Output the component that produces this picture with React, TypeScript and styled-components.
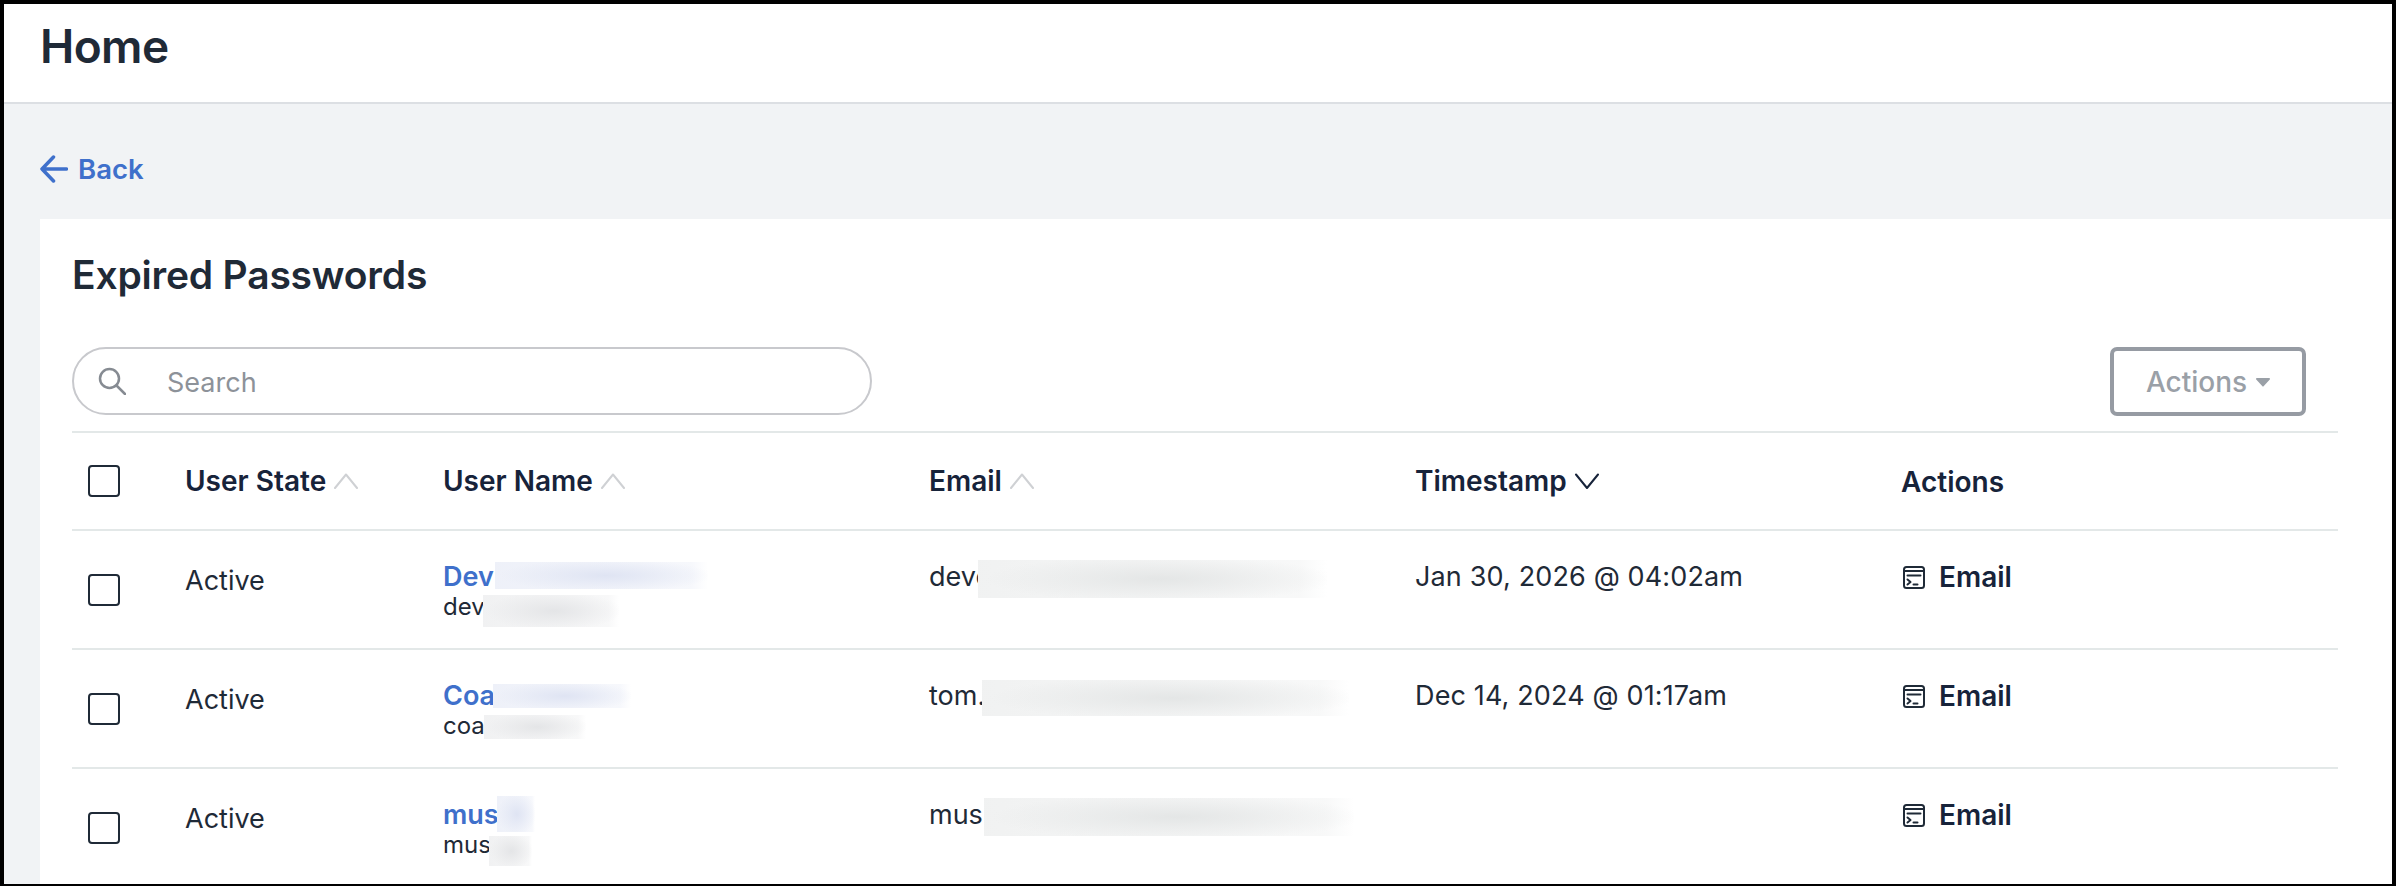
import React, { FC } from 'react'
import styled, { createGlobalStyle } from 'styled-components'

const GlobalStyle = createGlobalStyle`
    html, body { margin: 0; padding: 0; height: 100%; }
    body {
        font-family: Inter, "Liberation Sans", sans-serif;
        color: #1f2a37;
        background: #000;
        overflow: hidden;
    }
`

const rows = [
    {
        name: 'Dev', sub: 'dev', email: 'deve', stamp: 'Jan 30, 2026 @ 04:02am',
        nameBlur: { w: 213, h: 27, top: 1, left: 52 },
        subBlur: { w: 136, h: 32, top: 3, left: 40 },
        emailBlur: { w: 349, h: 38, top: 1, left: 49 },
    },
    {
        name: 'Coa', sub: 'coa', email: 'tom.', stamp: 'Dec 14, 2024 @ 01:17am',
        nameBlur: { w: 138, h: 24, top: 4, left: 50 },
        subBlur: { w: 102, h: 24, top: 4, left: 41 },
        emailBlur: { w: 367, h: 36, top: 2, left: 53 },
    },
    {
        name: 'mus', sub: 'mus', email: 'mus', stamp: '',
        nameBlur: { w: 38, h: 36, top: -3, left: 54 },
        subBlur: { w: 43, h: 30, top: 6, left: 46 },
        emailBlur: { w: 370, h: 38, top: 1, left: 55 },
    },
]

const Frame = styled.div`
    box-sizing: border-box;
    width: 2396px;
    height: 886px;
    padding: 4px 4px 2px 4px;
    background: #000;
`

const Screen = styled.div`
    height: 100%;
    background: #f1f3f5;
    overflow: hidden;
`

const TopBar = styled.header`
    box-sizing: border-box;
    height: 100px;
    padding: 12px 36px 0;
    background: #fff;
    border-bottom: 2px solid #dcdfe3;
`

const PageTitle = styled.h1`
    margin: 0;
    font-size: 46px;
    line-height: 60px;
    font-weight: 600;
    letter-spacing: -0.6px;
    color: #1f2a37;
`

const BackLink = styled.a`
    box-sizing: border-box;
    display: flex;
    align-items: center;
    gap: 10px;
    height: 115px;
    padding: 14px 0 0 36px;
    font-size: 27.5px;
    font-weight: 600;
    color: #3f70cb;
`

const Card = styled.section`
    margin-left: 36px;
    padding: 31px 54px 0 32px;
    background: #fff;
    height: 700px;
`

const CardTitle = styled.h2`
    margin: 0 0 46px;
    font-size: 39px;
    line-height: 50px;
    font-weight: 600;
    letter-spacing: -0.2px;
    color: #1f2a37;
`

const Toolbar = styled.div`
    display: flex;
    justify-content: space-between;
    align-items: center;
    height: 70px;
    padding-right: 32px;
    margin-bottom: 15px;
`

const SearchBox = styled.div`
    box-sizing: border-box;
    display: flex;
    align-items: center;
    gap: 41px;
    width: 800px;
    height: 68px;
    padding-left: 24px;
    border: 2px solid #c8c9cd;
    border-radius: 34px;
`

const SearchText = styled.span`
    padding-top: 2px;
    font-size: 27px;
    color: #8d9299;
`

const ActionsButton = styled.button`
    box-sizing: border-box;
    display: flex;
    align-items: center;
    justify-content: center;
    gap: 9px;
    width: 196px;
    height: 69px;
    padding-top: 2px;
    border: 4px solid #969ba3;
    border-radius: 7px;
    background: #fff;
    font-family: inherit;
    font-size: 28px;
    font-weight: 500;
    color: #9aa0a7;
`

const Row = styled.div<{ $height: number }>`
    display: grid;
    grid-template-columns: 113px 258px 486px 486px 486px 437px;
    align-items: start;
    box-sizing: border-box;
    height: ${(p) => p.$height}px;
    border-top: 2px solid #e3e8e8;
`

const CheckCell = styled.div<{ $top: number }>`
    padding: ${(p) => p.$top}px 0 0 16px;
`

const CheckBox = styled.div`
    box-sizing: border-box;
    width: 32px;
    height: 32px;
    border: 2px solid #1f2a37;
    border-radius: 4px;
`

const HeadCell = styled.div<{ $drop?: number }>`
    display: flex;
    align-items: center;
    gap: 7px;
    height: 96px;
    padding-top: ${(p) => p.$drop ?? 0}px;
    box-sizing: border-box;
    font-size: 28px;
    font-weight: 600;
    color: #17233a;
`

const TextCell = styled.div<{ $top: number }>`
    padding-top: ${(p) => p.$top}px;
    font-size: 27px;
    line-height: 36px;
    color: #1f2a37;
`

const StampCell = styled(TextCell)`
    letter-spacing: 0.14px;
`

const NameCell = styled.div`
    padding-top: 30px;
`

const NameLine = styled.div`
    font-size: 27px;
    line-height: 31px;
    font-weight: 600;
    color: #3f70cb;
`

const SubLine = styled.div`
    font-size: 24px;
    line-height: 30px;
    color: #1f2a37;
`

const Clear = styled.span`
    position: relative;
    display: inline-block;
`

const Blur = styled.span<{ $w: number; $h: number; $top: number; $left: number; $tint: string }>`
    position: absolute;
    left: ${(p) => p.$left}px;
    top: ${(p) => p.$top}px;
    width: ${(p) => p.$w}px;
    height: ${(p) => p.$h}px;
    background:
        radial-gradient(ellipse 50% 62% at 52% 50%, ${(p) => p.$tint}, transparent),
        linear-gradient(90deg, ${(p) => p.$tint}88 0%, ${(p) => p.$tint}44 92%, transparent 100%),
        #fff;
`

const ActionCell = styled.div`
    display: flex;
    align-items: center;
    gap: 14px;
    padding: 28px 0 0 2px;
    font-size: 28px;
    line-height: 36px;
    font-weight: 600;
    color: #17233a;
`

const ArrowLeft: FC = () => (
    <svg width="28" height="28" viewBox="0 0 28 28" fill="none" stroke="#3f70cb" strokeWidth="3.500" strokeLinecap="round" strokeLinejoin="round">
        <path d="M26.5 14H2M13.5 2 2 14l11.500 12" />
    </svg>
)

const SearchIcon: FC = () => (
    <svg width="28" height="28" viewBox="0 0 28 28" fill="none" stroke="#868b92" strokeWidth="2.500" strokeLinecap="round">
        <circle cx="11.500" cy="11.500" r="9.500" />
        <path d="M18.500 18.500 27 27" />
    </svg>
)

const Caret: FC = () => (
    <svg width="14" height="10" viewBox="0 0 14 10" fill="#9aa0a7">
        <path d="M1 1h12a1 1 0 0 1 .8 1.500L7.800 9a1 1 0 0 1-1.600 0L.2 2.500A1 1 0 0 1 1 1z" />
    </svg>
)

const Chevron: FC<{ up?: boolean; color: string }> = ({ up, color }) => (
    <svg width="26" height="16" viewBox="0 0 26 16" fill="none" stroke={color} strokeWidth="2" strokeLinecap="round" strokeLinejoin="round">
        <path d={up ? 'M2 15 13 1.500 24 15' : 'M2 1.500 13 15 24 1.500'} />
    </svg>
)

const ConsoleIcon: FC = () => (
    <svg width="22" height="23" viewBox="0 0 22 23" fill="none" stroke="#1f2a37" strokeWidth="2" strokeLinecap="round" strokeLinejoin="round">
        <rect x="1" y="1" width="20" height="21" rx="2.500" />
        <path d="M1 5h20M4.500 9.500h13M4.500 13.500l3 2.500-3 2.500M10.500 18.500h4" />
    </svg>
)

const sorts = [
    { label: 'User State', up: true, color: '#cfd1d4' },
    { label: 'User Name', up: true, color: '#cfd1d4' },
    { label: 'Email', up: true, color: '#cfd1d4' },
    { label: 'Timestamp', up: false, color: '#17233a' },
]

function toProps(b: { w: number; h: number; top: number; left: number }) {
    return { $w: b.w, $h: b.h, $top: b.top, $left: b.left }
}

const App: FC = () => (
    <Frame>
        <GlobalStyle />
        <Screen>
            <TopBar>
                <PageTitle>Home</PageTitle>
            </TopBar>
            <BackLink>
                <ArrowLeft />
                Back
            </BackLink>
            <Card>
                <CardTitle>Expired Passwords</CardTitle>
                <Toolbar>
                    <SearchBox>
                        <SearchIcon />
                        <SearchText>Search</SearchText>
                    </SearchBox>
                    <ActionsButton>
                        Actions
                        <Caret />
                    </ActionsButton>
                </Toolbar>
                <Row $height={98}>
                    <CheckCell $top={32}>
                        <CheckBox />
                    </CheckCell>
                    {sorts.map((item) => (
                        <HeadCell key={item.label}>
                            {item.label}
                            <Chevron up={item.up} color={item.color} />
                        </HeadCell>
                    ))}
                    <HeadCell $drop={2}>Actions</HeadCell>
                </Row>
                {rows.map((row) => (
                    <Row $height={119} key={row.name}>
                        <CheckCell $top={43}>
                            <CheckBox />
                        </CheckCell>
                        <TextCell $top={32}>Active</TextCell>
                        <NameCell>
                            <NameLine>
                                <Clear>
                                    {row.name}
                                    <Blur {...toProps(row.nameBlur)} $tint="#dfe4f3" />
                                </Clear>
                            </NameLine>
                            <SubLine>
                                <Clear>
                                    {row.sub}
                                    <Blur {...toProps(row.subBlur)} $tint="#e4e5e7" />
                                </Clear>
                            </SubLine>
                        </NameCell>
                        <TextCell $top={28}>
                            <Clear>
                                {row.email}
                                <Blur {...toProps(row.emailBlur)} $tint="#e4e6e6" />
                            </Clear>
                        </TextCell>
                        <StampCell $top={28}>{row.stamp}</StampCell>
                        <ActionCell>
                            <ConsoleIcon />
                            Email
                        </ActionCell>
                        <div />
                    </Row>
                ))}
            </Card>
        </Screen>
    </Frame>
)

export default App
